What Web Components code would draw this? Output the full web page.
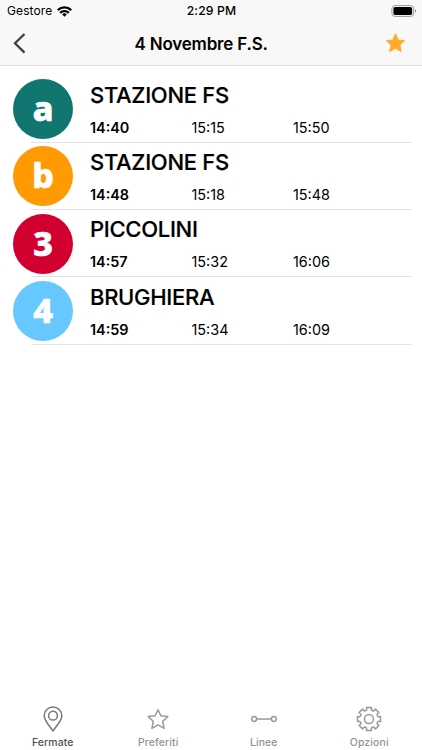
<!DOCTYPE html>
<html lang="it">
<head>
<meta charset="utf-8">
<meta name="viewport" content="width=device-width, initial-scale=1">
<title>4 Novembre F.S.</title>
<style>
  html, body { height: 100%; margin: 0; }
  body {
    background: #fff; color: #000; overflow: hidden;
    font-family: Inter, "Liberation Sans", sans-serif;
    --bar: #f8f8f8; --line: #dedee0; --accent: #ffab2d;
  }
</style>
</head>
<body>
<stop-screen>
  <status-bar slot="top" carrier="Gestore" time="2:29 PM"></status-bar>
  <nav-bar slot="top">4 Novembre F.S.</nav-bar>

  <line-row line="a" color="#10766f" name="STAZIONE FS" times="14:40 15:15 15:50"></line-row>
  <line-row line="b" color="#ff9a02" name="STAZIONE FS" times="14:48 15:18 15:48"></line-row>
  <line-row line="3" color="#d2002e" name="PICCOLINI" times="14:57 15:32 16:06"></line-row>
  <line-row line="4" color="#66c8ff" name="BRUGHIERA" times="14:59 15:34 16:09"></line-row>

  <tab-item slot="tabs" icon="pin" active>Fermate</tab-item>
  <tab-item slot="tabs" icon="star">Preferiti</tab-item>
  <tab-item slot="tabs" icon="line">Linee</tab-item>
  <tab-item slot="tabs" icon="gear">Opzioni</tab-item>
</stop-screen>

<script>
// 8-tooth gear outline centred on 0,0; the notches between teeth are round
function gearPath() {
  const at = (r, deg) => {
    const a = (deg * Math.PI) / 180;
    return `${(r * Math.cos(a)).toFixed(2)} ${(r * Math.sin(a)).toFixed(2)}`;
  };
  let d = "";
  for (let i = 0; i < 8; i++) {
    const c = i * 45;
    d += `${i ? "L" : "M"}${at(9.6, c - 14)}L${at(11.8, c - 12)}L${at(11.8, c + 12)}L${at(9.6, c + 14)}`;
    d += `A2.3 2.3 0 0 0 ${at(9.6, c + 31)}`;
  }
  return `${d}Z`;
}

const ICONS = {
  pin: `<path d="M0 12C-2.2 8-8.8 2.2-8.8-3.3A8.8 8.8 0 0 1 8.8-3.3C8.8 2.2 2.2 8 0 12Z"/><circle cy="-3.3" r="4.4"/>`,
  star: `<path d="M0-9.3 2.9-3.2 9.8-2.4 4.7 2.3 6.1 9.3 0 5.9-6.1 9.3-4.7 2.3-9.8-2.4-2.9-3.2Z"/>`,
  line: `<circle cx="-9.8" r="2.4"/><circle cx="9.8" r="2.4"/><path d="M-7.4 0H7.4"/>`,
  gear: `<path d="${gearPath()}"/><circle r="4.5"/>`,
};

class StopScreen extends HTMLElement {
  connectedCallback() {
    this.attachShadow({ mode: "open" }).innerHTML = `
      <style>
        :host { display: flex; flex-direction: column; height: 100vh; }
        header { box-sizing: border-box; height: 66px; background: var(--bar); border-bottom: 1px solid var(--line); }
        main { flex: 1; padding-top: 9.8px; }
        nav { display: flex; height: 50px; }
      </style>
      <header><slot name="top"></slot></header>
      <main><slot></slot></main>
      <nav><slot name="tabs"></slot></nav>
    `;
  }
}

class StatusBar extends HTMLElement {
  connectedCallback() {
    this.attachShadow({ mode: "open" }).innerHTML = `
      <style>
        :host {
          display: grid; grid-template-columns: 1fr auto 1fr; align-items: center;
          height: 22px; padding: 0 6px 0 7px; font-size: 12px; line-height: 22px;
        }
        .left { display: flex; align-items: center; gap: 5px; letter-spacing: 0.1px; }
        .time { font-weight: 500; font-size: 12.2px; letter-spacing: 0.15px; }
        svg { display: block; }
        .battery { justify-self: end; margin-right: -1px; }
      </style>
      <span class="left">${this.getAttribute("carrier")}
        <svg width="15" height="11" viewBox="0 0 15 11" fill="none" stroke="#000" stroke-width="2.3">
          <path d="M.8 4.1A9.6 9.6 0 0 1 14.2 4.1"/>
          <path d="M3.2 6.8A6.2 6.2 0 0 1 11.8 6.8"/>
          <path d="M7.5 10.8 5.2 8.4A3.3 3.3 0 0 1 9.8 8.4Z" fill="#000" stroke="none"/>
        </svg>
      </span>
      <span class="time">${this.getAttribute("time")}</span>
      <svg class="battery" width="26" height="12" viewBox="0 0 26 12">
        <rect x=".9" y=".6" width="21.7" height="10.8" rx="3" fill="none" stroke="#999"/>
        <rect x="2.4" y="2" width="18.7" height="8" rx="1.7"/>
        <path d="M24 4.2V7.8A2 2 0 0 0 24 4.2Z" fill="#888"/>
      </svg>
    `;
  }
}

class NavBar extends HTMLElement {
  connectedCallback() {
    this.attachShadow({ mode: "open" }).innerHTML = `
      <style>
        :host { display: flex; align-items: center; height: 43px; padding: 0 16px 0 13px; }
        /* the title sits a little left of centre */
        .back { flex: none; width: 14px; margin-right: 107.5px; }
        h1 { margin: 1px 0 0; font-size: 17px; font-weight: 600; line-height: 42px; letter-spacing: -0.2px; }
        svg { display: block; }
        .fav { margin: -1px 0 0 auto; }
      </style>
      <svg class="back" height="22" viewBox="0 0 14 22" fill="none" stroke="#3d3f43" stroke-width="2.3">
        <path d="M11.5 1 2 10.3 11.5 19.6"/>
      </svg>
      <h1><slot></slot></h1>
      <svg class="fav" width="21" height="20" viewBox="-10.5 -10 21 20" fill="var(--accent)" stroke="var(--accent)" stroke-linejoin="round">
        <path d="M0-9.2 2.7-3 9.1-2.4 4.4 2.1 5.8 8.6 0 5.3-5.8 8.6-4.4 2.1-9.1-2.4-2.7-3Z"/>
      </svg>
    `;
  }
}

class LineRow extends HTMLElement {
  connectedCallback() {
    const times = this.getAttribute("times").split(" ");
    this.attachShadow({ mode: "open" }).innerHTML = `
      <style>
        :host {
          display: flex; height: 67.2px; padding-left: 13px;
          background: linear-gradient(#e3e3e5, #e3e3e5) 31px 100% / 381px 1px no-repeat;
        }
        .badge {
          flex: none; width: 60px; height: 60px; margin: 3.4px 17px 0 0; border-radius: 50%;
          background: ${this.getAttribute("color")}; color: #fff; text-align: center;
          font: 800 34px/58px "Noto Sans", "Open Sans", sans-serif;
          -webkit-text-stroke: 0.7px #fff;
        }
        h2 { margin: 6.2px 0 0; font-size: 22px; font-weight: 500; line-height: 27px; letter-spacing: -0.3px; -webkit-text-stroke: 0.2px #000; }
        .times { display: grid; grid-template-columns: repeat(3, 101.5px); margin-top: 9px; font-size: 14.4px; line-height: 20px; }
        b { font-weight: 600; }
      </style>
      <div class="badge">${this.getAttribute("line")}</div>
      <div>
        <h2>${this.getAttribute("name")}</h2>
        <div class="times">${times.map((t, i) => (i ? `<span>${t}</span>` : `<b>${t}</b>`)).join("")}</div>
      </div>
    `;
  }
}

class TabItem extends HTMLElement {
  connectedCallback() {
    this.attachShadow({ mode: "open" }).innerHTML = `
      <style>
        :host {
          display: flex; flex: 1; flex-direction: column; align-items: center;
          padding-top: 6px; color: #929292; font-size: 10.4px; font-weight: 500;
          line-height: 14px; letter-spacing: 0.15px;
        }
        :host([active]) { color: #4c4c50; }
        svg { display: block; margin-bottom: 4px; }
      </style>
      <svg width="26" height="26" viewBox="-13 -13 26 26" fill="none" stroke="${this.hasAttribute("active") ? "#77777b" : "#999"}" stroke-width="1.5" stroke-linejoin="round">
        ${ICONS[this.getAttribute("icon")]}
      </svg>
      <span><slot></slot></span>
    `;
  }
}

customElements.define("stop-screen", StopScreen);
customElements.define("status-bar", StatusBar);
customElements.define("nav-bar", NavBar);
customElements.define("line-row", LineRow);
customElements.define("tab-item", TabItem);
</script>
</body>
</html>
